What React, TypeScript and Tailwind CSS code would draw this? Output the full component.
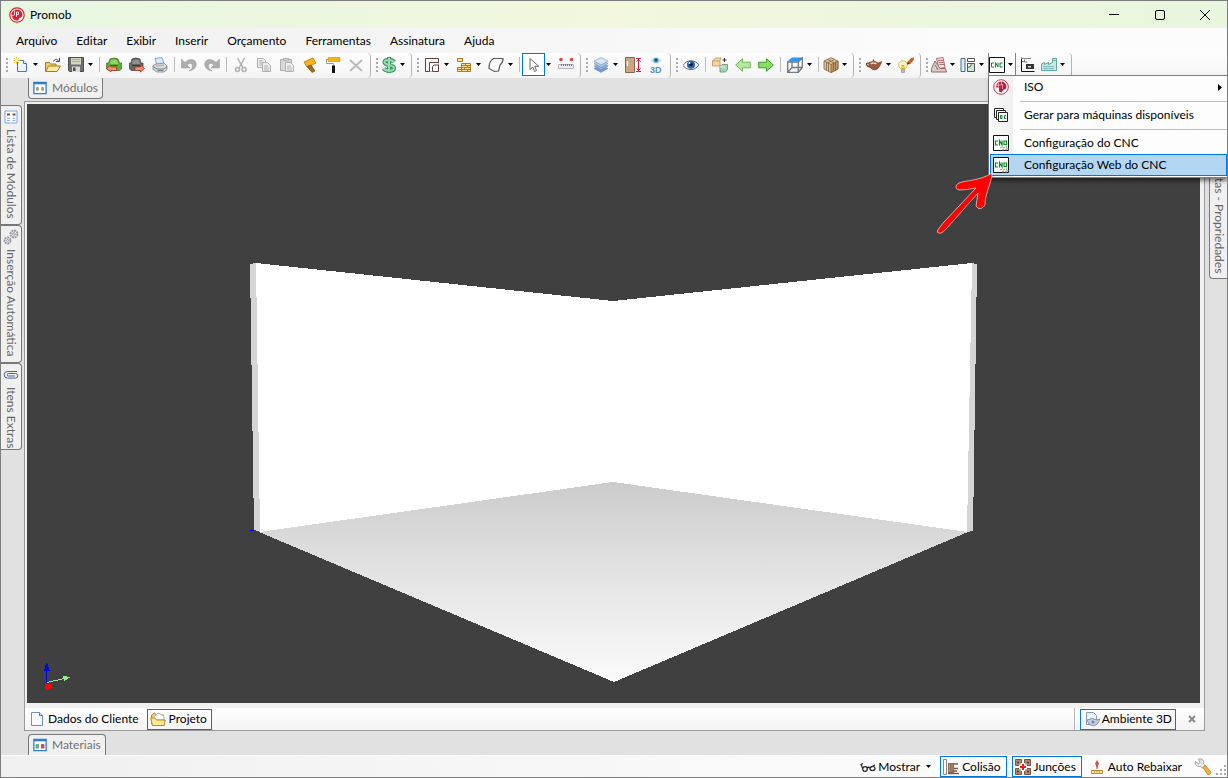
import React, { useState } from "react";
import clsx from "clsx";

type IconName = keyof typeof ICONS;

// 16x16 toolbar drawings
const ICONS = {
  logo: (
    <>
      <circle cx="8" cy="8" r="7.200" fill="#fff" stroke="#d8232f" strokeWidth="1.200" />
      <path d="M8 2.500a5.500 5.500 0 0 1 5.500 5c0 2-1 3-3 3.200L9 13.500A5.500 5.500 0 0 1 3 9.500L2.500 7A5.500 5.500 0 0 1 8 2.500z" fill="#d8232f" />
      <path d="M5.500 3.500V8l-3 1M9.500 5h-2v5M9.500 5v2.500h-2" stroke="#fff" strokeWidth=".8" fill="none" />
    </>
  ),
  newDoc: (
    <>
      <path d="M4.500 3.500h6l3 3v8h-9z" fill="#eef5ff" stroke="#4a78bb" />
      <path d="M10.500 3.500v3h3" fill="#fff" stroke="#4a78bb" />
      <path d="M3.500 0v7M0 3.500h7M1 1l5 5M6 1L1 6" stroke="#efc22a" strokeWidth=".9" />
      <circle cx="3.500" cy="3.500" r="1.500" fill="#fffbc4" />
    </>
  ),
  open: (
    <>
      <path d="M.5 5.500h4l1 1.500H11v7H.5z" fill="#f0cd6e" stroke="#a67b1c" />
      <path d="M3.500 9H15.500l-3.500 5.500H.7z" fill="#ffe9a3" stroke="#a67b1c" />
      <path d="M8.500 4.500c1-2.700 3.500-2.700 5-.7M14.500 1v3.500h-3.500" fill="none" stroke="#444" />
    </>
  ),
  save: (
    <>
      <path d="M.5.500h15v14h-14l-1-1z" fill="#6f6f6f" stroke="#4c4c4c" />
      <path d="M3 1h10v6.500H3z" fill="#cfd6b9" />
      <path d="M4 2.500h8M4 4.500h8" stroke="#aab292" />
      <path d="M4 9.500h8V15H4z" fill="#d8d8d8" />
      <path d="M5 10.500h2.500V14H5z" fill="#4c4c4c" />
    </>
  ),
  chairGreen: (
    <>
      <path d="M4 2q4-2 8 0l1.500 4h2v6l-2 1.500H3L.5 12V6h2z" fill="#5cae37" stroke="#356f1d" strokeWidth=".7" />
      <path d="M5 3q3-1 6 0l1 4H4z" fill="#8fd467" />
      <path d="M4 8.500h8" stroke="#2f6d1a" />
      <path d="M.5 11.500L5 8v2h5.500v3.500H5V15z" fill="#f4907d" stroke="#b5301d" strokeWidth=".8" />
    </>
  ),
  chairDark: (
    <>
      <path d="M3 2q4-2 8 0l1 4h2v6l-2 1.500H2.500L.5 12V6h1.500z" fill="#666" stroke="#3d3d3d" strokeWidth=".7" />
      <path d="M4 3q3-1 6 0l1 4H3z" fill="#8f8f8f" />
      <path d="M3 8.500h8" stroke="#333" />
      <path d="M15.500 11.500L11.500 8v2H6v3.500h5.500V15z" fill="#f4907d" stroke="#b5301d" strokeWidth=".8" />
    </>
  ),
  printer: (
    <>
      <path d="M3 1.500L10 .5l2 6.500-7 1.500z" fill="#d9ebfc" stroke="#7ea8d4" />
      <path d="M1 8.500l3-1.500 8-1 3 3v3.500L12 15H5l-4-2.500z" fill="#d9dcdf" stroke="#7b8187" strokeWidth=".8" />
      <path d="M1 9.500L5 12h7l3-2.500M5.500 13.500h6" stroke="#6c7278" strokeWidth=".9" fill="none" />
      <path d="M4 9l8-1" stroke="#9aa" />
    </>
  ),
  undo: <path d="M.5 2v9H9L6 8.200C8 5.800 11.500 6 11.500 9c0 2-1.500 3.500-3.500 5 5-.7 7.500-4 7.200-7.500C14.800 2 8.500.5 4 5.500z" fill="#acacac" stroke="#989898" strokeWidth=".5" />,
  redo: <path d="M15.500 2v9H7l3-2.800C8 5.800 4.500 6 4.500 9c0 2 1.500 3.500 3.500 5C3 13.300.5 10 .8 6.500 1.200 2 7.500.5 12 5.500z" fill="#acacac" stroke="#989898" strokeWidth=".5" />,
  cut: (
    <g fill="none" stroke="#b0b0b0" strokeWidth="1.500">
      <path d="M4.500 1l5.500 10M11.500 1L6 11" />
      <circle cx="4.500" cy="12.500" r="2" />
      <circle cx="11" cy="12.500" r="2" />
    </g>
  ),
  copy: (
    <g fill="#eee" stroke="#b0b0b0">
      <path d="M1.500 1.500h6l2 2v7h-8zM3 4h4M3 6h3M3 8h3" />
      <path d="M6.500 5.500h5l3 3v6h-8zM8 9h4M8 11h5M8 13h5" />
    </g>
  ),
  paste: (
    <g fill="#d8d8d8" stroke="#b0b0b0">
      <path d="M1.500 2.500h11v11h-11z" />
      <path d="M4.500 1.500h5v2h-5z" />
      <path d="M6.500 5.500h5l3 3v6h-8zM8 9h4M8 11h5M8 13h5" fill="#f2f2f2" />
    </g>
  ),
  brush: (
    <>
      <path d="M2 5l9-4 3 5-9 4z" fill="#f4b426" stroke="#cc8a0d" />
      <path d="M5 9.500L9 8l4 6-3 1.500z" fill="#9f6b16" stroke="#714c0f" strokeWidth=".6" />
    </>
  ),
  roller: (
    <>
      <path d="M3 .5h12v4H3z" fill="#f2b51c" stroke="#cf9104" strokeWidth=".6" />
      <path d="M3 2.500H1.500v4h7v2" fill="none" stroke="#999" />
      <path d="M7 8.500h3V16H7z" fill="#111" />
    </>
  ),
  remove: <path d="M2 3l12 11M14 3L2 14" stroke="#bbb" strokeWidth="2" />,
  money: (
    <>
      <path d="M13 5C11.500 2.500 3.500 2 3.500 5.200S13 7.500 13 11s-8 3.500-10.500.5M8 0v16" fill="none" stroke="#37905f" strokeWidth="4.200" />
      <path d="M13 5C11.500 2.500 3.500 2 3.500 5.200S13 7.500 13 11s-8 3.500-10.500.5M8 .7v14.600" fill="none" stroke="#9cdcb3" strokeWidth="2" />
    </>
  ),
  walls: (
    <>
      <path d="M1.500 1.500h13v13h-13z" fill="#fff" stroke="#e8a0a0" />
      <path d="M1.500 14.500v-13h13v4h-9v9z" fill="#fdf3f3" stroke="#5b4444" />
      <path d="M8.500 9.500l1.500-1.500h4.500v6.500h-6z" fill="#fff" stroke="#5b4444" />
    </>
  ),
  bricks: (
    <g fill="#ffe19b" stroke="#b27a12">
      <path d="M1.500 1.500h5v3h-5zM5.500 6.500h9v8h-9z" />
      <path d="M1.500 10.500h4v4h-4zM5.500 8.500h9M1.500 12.500h13M5.500 10.500h9M9.500 6.500v2M11.500 8.500v2M8.500 10.500v2M11.500 12.500v2" />
    </g>
  ),
  shape: <path d="M5.500 1.500h9.500c0 4-1 5-3 6.500l-1.500 6-4 .5-5.500-3c0-5 1-8 4.500-10z" fill="#fafafa" stroke="#5a5a5a" strokeWidth="1.200" />,
  cursor: <path d="M4 1.500v11l2.800-2.500 1.700 4.500 2-1-1.700-4.200h4z" fill="#fff" stroke="#666" />,
  ruler: (
    <>
      <circle cx="3" cy="2.500" r="1.800" fill="#d94a4a" />
      <circle cx="13.500" cy="2.500" r="1.800" fill="#d94a4a" />
      <path d="M.5 7.500h15v4H.5z" fill="#eceaf3" stroke="#b5b2c2" />
      <path d="M3.500 7v2M5.500 7v2M7.500 7v2M9.500 7v2M11.500 7v2M13.500 7v2" stroke="#77758a" />
    </>
  ),
  layers: (
    <g stroke="#6d8fbc" strokeWidth=".6">
      <path d="M1 11.500L8 8l7 3.500L8 15.500z" fill="#7599c8" />
      <path d="M1 9l7-3.500L15 9l-7 4z" fill="#8fb0d6" />
      <path d="M1 6.500L8 3l7 3.500-7 4z" fill="#b0cae5" />
      <path d="M1 4l7-3.500L15 4 8 8z" fill="#d9e6f3" />
    </g>
  ),
  door: (
    <>
      <path d="M.5.500h9v15h-9z" fill="#c9a785" stroke="#866549" />
      <path d="M2.500 4v5" stroke="#fff" strokeWidth="1.500" />
      <path d="M11 1.500h5M11 14.500h5M13.500 2v12M11.500 4.500l2-2 2 2M11.500 11.500l2 2 2-2" stroke="#d3174f" fill="none" />
    </>
  ),
  view3d: (
    <>
      <ellipse cx="8" cy="3.500" rx="5.500" ry="3" fill="#cde6f3" />
      <circle cx="8" cy="3.300" r="2.500" fill="#4a8db5" />
      <circle cx="8" cy="3" r="1" fill="#173248" />
      <text x="2" y="15.500" fontSize="9" fontWeight="700" fill="#5b8fb8" fontFamily="Liberation Sans">3D</text>
    </>
  ),
  eye: (
    <>
      <path d="M0 8.500C3 2.500 12 2 16 8c-4 6-12 6-16 .5z" fill="#f5f5fb" stroke="#6a6a80" />
      <circle cx="8" cy="7.800" r="4" fill="#2b64b5" />
      <circle cx="8" cy="7.500" r="1.800" fill="#07142c" />
      <circle cx="6.500" cy="6" r="1" fill="#fff" />
    </>
  ),
  swapBox: (
    <>
      <path d="M.5 4l3-3h5.500l-1 2.500V9H.5z" fill="#f6d6a8" stroke="#c0924f" strokeWidth=".8" />
      <path d="M.5 4H8" stroke="#c0924f" strokeWidth=".8" />
      <path d="M8 9.500l2-2h5.500v5l-2 2.500H8z" fill="#a9d1b8" stroke="#5f8a70" strokeWidth=".8" />
      <path d="M8 10h5.500" stroke="#e0f3e6" />
      <path d="M12.500 1v4M10.500 3h4" stroke="#333" />
    </>
  ),
  left: <path d="M.7 8L7.500 1.700v3.500h7.800v5.600H7.500v3.500z" fill="#b4e99b" stroke="#70b955" />,
  right: <path d="M15.300 8L8.500 1.700v3.500H.7v5.600h7.800v3.500z" fill="#86dd62" stroke="#429c28" />,
  wireCube: (
    <>
      <path d="M5 .5h10.500l-4.500 4H.5z" fill="#2f97f0" />
      <path d="M.7 5h10.600v10.300H.7zM11.300 5l4-4.300v9.800l-4 4.800M5 5v5.500h10.300M.7 15.300L5 10.500" fill="none" stroke="#737980" strokeWidth="1.300" />
    </>
  ),
  crate: (
    <g stroke="#84653f" strokeWidth=".8">
      <path d="M8 .7l7 3.300v8l-7 3.500L1 12V4z" fill="#dcc196" />
      <path d="M8 7.500L15 4v8l-7 3.500z" fill="#b9966a" />
      <path d="M1 4l7 3.500M3.500 5.200v8M5.500 6.200v8M10.500 6.200v8M12.500 5.200v8M4.500 2.500l7 3.500M11.500 2.500L4.500 6" fill="none" />
    </g>
  ),
  teapot: (
    <>
      <path d="M2.500 6Q8 2.500 12 6l3.500-1.500c.5 1-2 5-3.500 7q-3.500 3-7 0C3.500 10 2.500 8 2.500 6z" fill="#9c5a3c" stroke="#6a3a22" strokeWidth=".6" />
      <path d="M3 6.500C-1 5 0 9.500 4 10M7.500 2.500V4" fill="none" stroke="#7a4428" strokeWidth="1.300" />
      <path d="M4.500 7q3-2 6 0" stroke="#f0cdb8" strokeWidth="1.300" fill="none" />
    </>
  ),
  bulb: (
    <>
      <circle cx="5" cy="8" r="4.300" fill="#fff8c4" stroke="#dcbd55" />
      <path d="M3.500 12h3v3.500h-3z" fill="#b8b8b8" stroke="#888" strokeWidth=".6" />
      <path d="M4 12V8.500h2V12" fill="none" stroke="#d5a010" />
      <path d="M9.500 5L13 1l3-.5-.5 3L12 7z" fill="#c8611a" />
      <path d="M9.500 4.500L12 7l-3 .5z" fill="#333" />
    </>
  ),
  machine: (
    <g stroke="#b46a6a">
      <path d="M5.500 1.500L12 .5l2 10-6 1z" fill="#f7e2e2" />
      <path d="M7 3.500h5M7.500 5.500h5M8.500 7.500h4.500" />
      <path d="M.5 11.500L4 4l5 7.500h5.500l1 3.500H.5z" fill="#dccaca" stroke="#8a6d6d" />
      <path d="M4 8l3 5" stroke="#8a6d6d" />
    </g>
  ),
  panels: (
    <>
      <path d="M1 1.500h4v13H1z" fill="#d8eaff" stroke="#4f6984" />
      <path d="M7.500 1.500h7v3h-7z" fill="#fff" stroke="#555" />
      <path d="M7.500 6.500h7v8h-7z" fill="#c8edd2" stroke="#555" />
      <path d="M7.500 6.500h4l-1 3-3 1z" fill="#fff" stroke="#555" />
    </>
  ),
  cnc: (
    <>
      <path d="M.5.500h15v15H.5z" fill="#fff" stroke="#111" />
      <path d="M5 6H2.500v4H5M6.500 10.500v-5L9 10V5.500M13.500 6H11v4h2.500" fill="none" stroke="#13842b" />
    </>
  ),
  cncConfig: (
    <>
      <path d="M.5.500h15v15H.5z" fill="#fff" stroke="#111" />
      <path d="M5 6H2.500v4H5M6.500 10.500v-5L9 10V5.500M13.500 9.500H11V6h2.500v4" fill="none" stroke="#13842b" strokeWidth="1.200" />
      <path d="M7 12.500h7M9 14.500h5M13 10.500l2 4" stroke="#aaa" strokeWidth="1.500" strokeDasharray="2 1" />
    </>
  ),
  copies: (
    <g fill="#fff" stroke="#222">
      <path d="M1.500 1.500h9v9h-9z" />
      <path d="M3.500 3.500h9v9h-9z" />
      <path d="M5.500 5.500h9v9h-9z" />
      <path d="M7.500 8.500h1.500v3H7.500zM13 8.500h-1.500v3H13" stroke="#13842b" />
    </g>
  ),
  iso: (
    <>
      <circle cx="8" cy="8" r="7.300" fill="#fff" stroke="#c9364d" />
      <path d="M8 2.500a5.500 5.500 0 0 1 5.500 5c0 2-1 3-3 3.200L8.500 13.500 6 12.500V9L3 8A5.500 5.500 0 0 1 8 2.500z" fill="#c01f3b" />
      <path d="M5.500 4v5M8.500 3v3h-3M3 6.500h3M9.500 5v5" stroke="#f3b5c0" strokeWidth=".8" fill="none" />
    </>
  ),
  label: (
    <>
      <path d="M1.500.500v14h13" fill="none" stroke="#111" />
      <path d="M1 1.500h10" stroke="#888" />
      <path d="M4.500 2.500v2.500h3M2 4.500h3" stroke="#777" fill="none" />
      <path d="M6 7h8v5H6z" fill="#333" />
      <path d="M8 9h3v1.500H8z" fill="#ddd" />
    </>
  ),
  factory: (
    <>
      <path d="M.5 13.500V7l3-1.500v2l4-2v2l4-2v-4h4v12z" fill="#c8e8e4" stroke="#5fa5a1" />
      <path d="M2 9.500h11M2 11.500h11M12 3.500h3" stroke="#7dbab5" />
    </>
  ),
  modules: (
    <>
      <path d="M1 1.500h14v13H1z" fill="#fff" stroke="#2d7dd2" strokeWidth="1.500" />
      <path d="M1 2.500h14" stroke="#2d7dd2" strokeWidth="2.500" />
      <ellipse cx="5" cy="9" rx="1.700" ry="2.300" fill="#a8957c" />
      <ellipse cx="11" cy="9" rx="1.700" ry="2.300" fill="#a8957c" />
    </>
  ),
  materials: (
    <>
      <path d="M1 1.500h14v13H1z" fill="#fff" stroke="#2d7dd2" strokeWidth="1.500" />
      <path d="M1 2.500h14" stroke="#2d7dd2" strokeWidth="2.500" />
      <path d="M3 7h4v5H3z" fill="#6ba584" />
      <path d="M9 7h4v5H9z" fill="#c65151" />
    </>
  ),
  list: (
    <>
      <path d="M2 2h12v12H2z" fill="#fff" stroke="#7ba5de" />
      <path d="M4 5.500h3M9.500 5.500h3" stroke="#6d5947" strokeWidth="2" />
      <path d="M4 9.500h3M9.500 9.500h3M4 11.500h3M9.500 11.500h3" stroke="#8fb2df" />
    </>
  ),
  gears: (
    <g fill="none" stroke="#9b98a4">
      <circle cx="11" cy="5" r="3.500" strokeWidth="2" strokeDasharray="2 .7" />
      <circle cx="4.500" cy="11.500" r="3" strokeWidth="2" strokeDasharray="2 .7" />
      <circle cx="11" cy="5" r="1.300" />
      <circle cx="4.500" cy="11.500" r="1" />
    </g>
  ),
  clip: <path d="M14 4.500H4.500a3.300 3.300 0 0 0 0 6.600h8a2.300 2.300 0 0 0 0-4.600H5.500a1.200 1.200 0 0 0 0 2.500h6.500" fill="none" stroke="#4a628c" />,
  page: (
    <>
      <path d="M2.500 1.500h8l3 3v10h-11z" fill="#f6faff" stroke="#6e90c4" />
      <path d="M10.500 1.500v3h3" fill="#cfe0f7" stroke="#4f78b5" />
    </>
  ),
  project: (
    <>
      <path d="M1.500 4l3-2 2 2h7v9h-12z" fill="#f0cf66" stroke="#b58c25" />
      <path d="M4 6l4-4 6 3v4H4z" fill="#fff" stroke="#8f96a8" strokeWidth=".7" />
      <path d="M.7 7h4l2 2h8.500l-1 5.500H2.500z" fill="#ffe791" stroke="#b58c25" />
    </>
  ),
  render: (
    <>
      <path d="M2.500 1.500h7l3 3v9h-10z" fill="#f0f6ff" stroke="#7f9cca" />
      <path d="M3 9q5-3 10 0l3-1-2 4q-4 5-9 1z" fill="#ccccd2" stroke="#7e7e88" strokeWidth=".8" />
      <circle cx="9" cy="11" r="1.500" fill="#5a86cc" />
    </>
  ),
  glasses: (
    <g fill="none" stroke="#222" strokeWidth="1.200">
      <circle cx="5" cy="10" r="2.300" />
      <ellipse cx="12.500" cy="9.500" rx="2.500" ry="2" />
      <path d="M7 9q1.500-1.500 3 0M2.700 9.500L1 5.500l2-1M10.500 8.500L15 6" />
    </g>
  ),
  collision: (
    <>
      <path d="M.5.500h3v15h-3z" fill="#fff" stroke="#888" />
      <path d="M5 4h6v10H5z" fill="#8f6d58" />
      <path d="M11 5h4M11 9.500h4M8 12h6M5 14.500h11" stroke="#7c5a45" strokeWidth="1.300" />
      <path d="M6.500 5v8M9 5v8" stroke="#b7937b" />
    </>
  ),
  joints: (
    <>
      <path d="M.5.500h6v6h-6zM9.500.500h6v6h-6zM.5 9.500h6v6h-6zM9.500 9.500h6v6h-6z" fill="#a98872" stroke="#76563f" />
      <path d="M2 3.500h2M12 3.500h2M2 12.500h2M12 12.500h2" stroke="#4f3525" strokeWidth="1.500" />
      <path d="M8 4v8M4 8h8" stroke="#fff" strokeWidth="4.500" />
      <path d="M8 5v6M5 8h6" stroke="#ed1c24" strokeWidth="2" />
    </>
  ),
  lower: (
    <>
      <path d="M8 1l2 3.500L8 9 6 4.500z" fill="#d9504a" />
      <path d="M8 7v3" stroke="#d43a34" />
      <path d="M2.500 11.500h11v3h-11zM5.500 12v1.500M8 12v1.500M10.500 12v1.500" fill="#ffe7a8" stroke="#c08c2c" />
    </>
  ),
  wrench: (
    <>
      <path d="M1 3l3 2 1.500-1L4 1c4-1 5 2 4.500 4L10 7 7.500 9 6 7.500C3 8 .5 6 1 3z" fill="#e9e9eb" stroke="#999" strokeWidth=".8" />
      <path d="M8 8.500L10 6.500l5 6q0 2-2.500 2.500z" fill="#f7b03c" stroke="#cc8418" strokeWidth=".8" />
    </>
  ),
};

function Icon({ name, className }: { name: IconName; className?: string }) {
  return (
    <svg viewBox="0 0 16 16" className={clsx("shrink-0", className || "h-4 w-4")} aria-hidden="true">
      {ICONS[name]}
    </svg>
  );
}

function Caret() {
  return (
    <svg viewBox="0 0 5 3" className="h-[3px] w-[5px] shrink-0" aria-hidden="true">
      <path d="M0 0h5L2.500 3z" fill="#000" />
    </svg>
  );
}

type ToolItem = { icon?: IconName; label?: string; kind?: "split" | "narrow" | "sep"; active?: boolean };

const sep: ToolItem = { kind: "sep" };

const TOOL_GROUPS: ToolItem[][] = [
  [
    { icon: "newDoc", label: "Novo", kind: "split" },
    { icon: "open", label: "Abrir" },
    { icon: "save", label: "Salvar", kind: "split" },
    sep,
    { icon: "chairGreen", label: "Importar" },
    { icon: "chairDark", label: "Exportar" },
    { icon: "printer", label: "Imprimir" },
    sep,
    { icon: "undo", label: "Desfazer" },
    { icon: "redo", label: "Refazer" },
    sep,
    { icon: "cut", label: "Recortar" },
    { icon: "copy", label: "Copiar" },
    { icon: "paste", label: "Colar" },
    { icon: "brush", label: "Pincel" },
    { icon: "roller", label: "Pintar" },
    { icon: "remove", label: "Excluir" },
  ],
  [{ icon: "money", label: "Preço", kind: "narrow" }],
  [
    { icon: "walls", label: "Ambiente", kind: "split" },
    { icon: "bricks", label: "Paredes", kind: "split" },
    { icon: "shape", label: "Forma", kind: "split" },
    sep,
    { icon: "cursor", label: "Selecionar", kind: "split", active: true },
    { icon: "ruler", label: "Medir" },
  ],
  [
    { icon: "layers", label: "Camadas", kind: "split" },
    { icon: "door", label: "Altura" },
    { icon: "view3d", label: "Vista 3D" },
  ],
  [
    { icon: "eye", label: "Visualizar" },
    sep,
    { icon: "swapBox", label: "Substituir" },
    { icon: "left", label: "Anterior" },
    { icon: "right", label: "Próximo" },
    sep,
    { icon: "wireCube", label: "Vista", kind: "split" },
    sep,
    { icon: "crate", label: "Textura", kind: "narrow" },
  ],
  [
    { icon: "teapot", label: "Render", kind: "split" },
    { icon: "bulb", label: "Luzes" },
  ],
  [
    { icon: "machine", label: "Máquina", kind: "narrow" },
    { icon: "panels", label: "Painéis", kind: "narrow" },
    { icon: "cnc", label: "CNC", kind: "narrow" },
    { icon: "label", label: "Etiqueta" },
    { icon: "factory", label: "Fábrica", kind: "narrow" },
  ],
];

const MENUS = ["Arquivo", "Editar", "Exibir", "Inserir", "Orçamento", "Ferramentas", "Assinatura", "Ajuda"];

const CNC_MENU: { icon: IconName; text: string; submenu?: boolean; divided?: boolean; selected?: boolean }[] = [
  { icon: "iso", text: "ISO", submenu: true, divided: true },
  { icon: "copies", text: "Gerar para máquinas disponíveis", divided: true },
  { icon: "cncConfig", text: "Configuração do CNC" },
  { icon: "cncConfig", text: "Configuração Web do CNC", selected: true },
];

function CncMenu() {
  return (
    <div className="absolute left-px top-[22px] z-20 w-[239px] border-l border-[#808080]">
      <div role="menu" className="border-b border-t border-[#808080] bg-[linear-gradient(90deg,#fcfcfc,#f0f0f0_24px,#fdfdfd_24px)] pb-px pl-px shadow-[1px_3px_4px_rgba(0,0,0,0.5)]">
        {CNC_MENU.map((item) => (
          <React.Fragment key={item.text}>
            <button
              role="menuitem"
              className={clsx(
                "flex h-[22px] w-full items-center border pl-[2px] text-left",
                item.selected ? "border-[#0078d7] bg-[#b3d7f3]" : "border-transparent"
              )}
            >
              <Icon name={item.icon} />
              <span className="ml-[15px] flex-1">{item.text}</span>
              {item.submenu && (
                <svg viewBox="0 0 4 7" className="mr-1 h-[7px] w-1" aria-hidden="true">
                  <path d="M0 0v7l4-3.500z" />
                </svg>
              )}
            </button>
            {item.divided && <div className="my-[2px] ml-[30px] h-[2px] border-b border-[#bdbdbd]" />}
          </React.Fragment>
        ))}
      </div>
      {/* hand-drawn arrow pointing at the selected entry */}
      <svg viewBox="0 0 64 68" className="pointer-events-none absolute -bottom-[62px] right-[230px] h-[68px] w-16" aria-hidden="true">
        <path
          d="M4.500 59Q5 57 11 50L43 16Q33 18 26 18C22 17 22 13 26 11C33 8 47 9 59 1C59 11 52 20 52 33Q47 40 43 34L45 21L14 56Q9 62 6 61Q4 61 4.500 59Z"
          fill="#f00"
          stroke="#fff"
          strokeWidth="0.6"
        />
      </svg>
    </div>
  );
}

function ToolButton({ item, cncOpen, onToggleCnc }: { item: ToolItem; cncOpen: boolean; onToggleCnc: () => void }) {
  if (item.kind === "sep" || !item.icon) {
    return (
      <div className="flex w-[6px] justify-center">
        <div className="my-1 w-px bg-[#bdbdbd]" />
      </div>
    );
  }
  const isCnc = item.icon === "cnc";
  return (
    <div className="relative flex">
      {isCnc && cncOpen && <div className="absolute bottom-0 left-px right-0 top-0 border-x border-[#808080] bg-[#fdfdfd]" />}
      <button
        aria-label={item.label}
        onClick={isCnc ? onToggleCnc : undefined}
        className={clsx(
          "relative flex items-center justify-center border",
          item.kind === "narrow" ? "w-5" : "w-[23px]",
          item.active ? "border-[#0078d7] bg-white" : "border-transparent"
        )}
      >
        <Icon name={item.icon} />
      </button>
      {item.kind && (
        <button aria-label={`${item.label} opções`} className="relative flex w-[9px] items-center pl-px">
          <Caret />
        </button>
      )}
      {isCnc && cncOpen && <CncMenu />}
    </div>
  );
}

function Toolbar() {
  const [cncOpen, setCncOpen] = useState(true);
  return (
    <div className="flex h-[25px] bg-[linear-gradient(180deg,#fdfdfd,#f4f4f4)]">
      {TOOL_GROUPS.map((group, i) => (
        <div key={i} className="flex rounded-r-sm border-r border-[#b4b4b4] pr-[3px]">
          <div className="my-[5px] ml-[5px] w-[3px]">
            <div className="h-full w-[2px] bg-[repeating-linear-gradient(180deg,#aaa_0px,#aaa_2px,transparent_2px,transparent_4px)]" />
          </div>
          <div className="mb-[2px] flex">
            {group.map((item, j) => (
              <ToolButton key={j} item={item} cncOpen={cncOpen} onToggleCnc={() => setCncOpen(!cncOpen)} />
            ))}
          </div>
        </div>
      ))}
    </div>
  );
}

function SideTab({ icon, text, className }: { icon: IconName; text: string; className: string }) {
  return (
    <button className={clsx("flex w-[21px] flex-col items-center gap-1 rounded-r border-b border-r border-t border-[#787878] bg-[#f0f0f0] pt-[3px] text-[#666]", className)}>
      <Icon name={icon} />
      <span className="whitespace-nowrap leading-4 [writing-mode:vertical-rl]">{text}</span>
    </button>
  );
}

function Scene() {
  return (
    <svg viewBox="0 0 1173 598" preserveAspectRatio="xMidYMin meet" className="absolute inset-0 h-full w-full" shapeRendering="crispEdges" aria-label="Ambiente 3D">
      <defs>
        <linearGradient id="floor" x1="0" y1="0" x2="0" y2="1">
          <stop offset="0" stopColor="#cbcbcb" />
          <stop offset="0.5" stopColor="#e5e5e5" />
          <stop offset="1" stopColor="#fbfbfb" />
        </linearGradient>
      </defs>
      <path d="M223 160L229 159L234 428L227 426Z" fill="#d5d5d5" />
      <path d="M950 160L944 159L940 428L946 427Z" fill="#d5d5d5" />
      <path d="M229 159L586 197L945 159L940 428L586 378L233 428Z" fill="#fff" />
      <path d="M232 428L586 378L941 428L587 578Z" fill="url(#floor)" />
      <path d="M223 426h4v1h-4z" fill="#00f" />
      <path d="M19 564h1v15h-1z" fill="#00f" />
      <path d="M17 567l2-8h1l3 8z" fill="#00f" />
      <path d="M20 578.500l17-4" stroke="#90ee90" />
      <path d="M36 572l8 1-7 4z" fill="#90ee90" />
      <path d="M18 580h7v4l-3 2h-4z" fill="#f00" />
    </svg>
  );
}

export default function App() {
  return (
    <div className="flex min-h-screen flex-col overflow-hidden border border-[#7d7d7d] bg-[#e1e1e1] font-['Lato',sans-serif] text-xs text-black">
      <header className="flex h-[27px] items-center bg-[linear-gradient(90deg,#e7f7e2,#f2f7dd_50%,#e8f6df)] pl-2">
        <Icon name="logo" />
        <span className="ml-[5px] flex-1">Promob</span>
        <button aria-label="Minimizar" className="flex h-full w-[46px] items-center justify-center">
          <span className="h-px w-[10px] bg-black" />
        </button>
        <button aria-label="Maximizar" className="flex h-full w-[46px] items-center justify-center">
          <span className="h-[10px] w-[10px] rounded-xs border border-black" />
        </button>
        <button aria-label="Fechar" className="flex h-full w-11 items-center justify-center">
          <svg viewBox="0 0 10 10" className="h-[10px] w-[10px]">
            <path d="M0 0l10 10M10 0L0 10" stroke="#000" />
          </svg>
        </button>
      </header>

      <nav className="flex h-[25px] items-center gap-[19px] bg-[linear-gradient(90deg,#f0f0f0,#fcfcfc_80%)] pl-[15px]">
        {MENUS.map((menu) => (
          <button key={menu}>{menu}</button>
        ))}
      </nav>

      <Toolbar />

      <div className="flex h-[23px] items-start pl-[27px]">
        <button className="flex h-[21px] items-center gap-[5px] rounded-b border border-t-0 border-[#787878] bg-[#f0f0f0] px-1 text-[#707070]">
          <Icon name="modules" className="h-[14px] w-[14px]" />
          Módulos
        </button>
      </div>

      <div className="flex flex-1">
        <aside className="flex w-[23px] shrink-0 flex-col pt-1">
          <SideTab icon="list" text="Lista de Módulos" className="h-[120px]" />
          <SideTab icon="gears" text="Inserção Automática" className="h-[138px]" />
          <SideTab icon="clip" text="Itens Extras" className="h-[87px]" />
        </aside>

        <main className="flex min-w-0 flex-1 flex-col border border-[#9a9a9a] bg-[#f0f0f0]">
          <div className="relative ml-[2px] mr-1 mt-[2px] flex-1 bg-[#404040]">
            <Scene />
          </div>
          <div className="mt-[5px] flex h-[22px] bg-[linear-gradient(180deg,#fff,#f4f4f4)]">
            <div className="flex flex-1 items-center border-r border-[#b4b4b4] pl-1">
              <button className="flex items-center gap-[3px] pr-2">
                <Icon name="page" />
                Dados do Cliente
              </button>
              <button className="flex h-[21px] items-center gap-[3px] border border-[#0078d7] pl-[2px] pr-1">
                <Icon name="project" />
                Projeto
              </button>
            </div>
            <div className="flex items-center pl-[5px]">
              <button className="flex h-[21px] items-center gap-[2px] border border-[#0078d7] px-[3px]">
                <Icon name="render" />
                Ambiente 3D
              </button>
              <button aria-label="Fechar aba" className="flex w-7 justify-center pl-1">
                <svg viewBox="0 0 8 8" className="h-2 w-2">
                  <path d="M1 1l6 6M7 1L1 7" stroke="#8a8a8a" strokeWidth="2" />
                </svg>
              </button>
            </div>
          </div>
        </main>

        <aside className="flex w-[22px] shrink-0 flex-col items-end">
          <button className="flex h-[178px] w-[18px] items-end justify-center rounded-l border border-r-0 border-[#787878] bg-[#f0f0f0] pb-[5px] text-[#666]">
            <span className="whitespace-nowrap leading-4 [writing-mode:vertical-rl]">Ferramentas - Propriedades</span>
          </button>
        </aside>
      </div>

      <div className="flex h-6 items-end pl-[27px]">
        <button className="flex h-[21px] items-center gap-[5px] rounded-t border border-b-0 border-[#787878] bg-[#f0f0f0] px-1 text-[#707070]">
          <Icon name="materials" className="h-[14px] w-[14px]" />
          Materiais
        </button>
      </div>

      <footer className="flex h-[22px] items-center justify-end border-t border-white bg-[linear-gradient(90deg,#f0f0f0,#fcfcfc_80%)]">
        <button className="flex items-center gap-[2px]">
          <Icon name="glasses" />
          Mostrar
          <span className="ml-1">
            <Caret />
          </span>
        </button>
        <button className="ml-[9px] flex h-[21px] items-center gap-[3px] border border-[#0078d7] pl-[2px] pr-[5px]">
          <Icon name="collision" />
          Colisão
        </button>
        <button className="ml-[5px] flex h-[21px] items-center gap-[3px] border border-[#0078d7] pl-[2px] pr-[5px]">
          <Icon name="joints" />
          Junções
        </button>
        <button className="ml-[7px] flex items-center gap-[3px]">
          <Icon name="lower" />
          Auto Rebaixar
        </button>
        <button aria-label="Ajustes" className="ml-3">
          <Icon name="wrench" className="h-[18px] w-[18px]" />
        </button>
        <svg viewBox="0 0 11 11" className="ml-1 mt-2 h-[11px] w-[11px]" aria-hidden="true">
          <path d="M8 0h2v2H8zM4 4h2v2H4zM8 4h2v2H8zM0 8h2v2H0zM4 8h2v2H4zM8 8h2v2H8z" fill="#aaa" />
        </svg>
      </footer>
    </div>
  );
}
